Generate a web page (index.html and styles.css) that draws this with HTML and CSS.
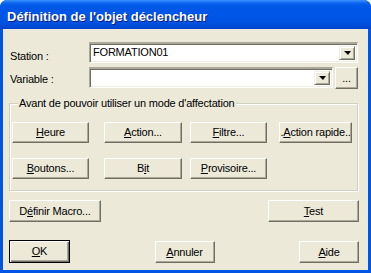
FILE: index.html
```html
<!DOCTYPE html>
<html lang="fr">
<head>
<meta charset="utf-8">
<title>Définition de l'objet déclencheur</title>
<link rel="stylesheet" href="styles.css">
</head>
<body>
<div class="window">
  <div class="titlebar"><span class="title">Définition de l'objet déclencheur</span></div>
  <div class="client">
    <div class="fields">
      <span class="lbl lbl-station">Station :</span>
      <div class="combo combo-wide">
        <span class="combo-text">FORMATION01</span>
        <span class="drop"><i class="tri"></i></span>
      </div>
      <span class="lbl lbl-var">Variable :</span>
      <div class="combo">
        <span class="combo-text"></span>
        <span class="drop"><i class="tri"></i></span>
      </div>
      <button class="btn btn-dots">...</button>
    </div>
    <fieldset class="group">
      <legend class="legend">Avant de pouvoir utiliser un mode d'affectation</legend>
      <div class="grid">
        <button class="btn b1"><u>H</u>eure</button>
        <button class="btn b2"><u>A</u>ction...</button>
        <button class="btn b3"><u>F</u>iltre...</button>
        <button class="btn b4 clip"><span class="clip-in">.<u>A</u>ction rapide..</span></button>
        <button class="btn b1"><u>B</u>outons...</button>
        <button class="btn b2">B<u>i</u>t</button>
        <button class="btn b3"><u>P</u>rovisoire...</button>
      </div>
    </fieldset>
    <div class="row-macro">
      <button class="btn btn-macro">D<u>é</u>finir Macro...</button>
      <button class="btn btn-test"><u>T</u>est</button>
    </div>
    <div class="row-bottom">
      <button class="btn btn-ok default"><u>O</u>K</button>
      <button class="btn btn-cancel"><u>A</u>nnuler</button>
      <button class="btn btn-help"><u>A</u>ide</button>
    </div>
  </div>
</div>
</body>
</html>
```
FILE: styles.css
```css
* { box-sizing: border-box; }
html, body { margin: 0; padding: 0; background: #fff; }
body { width: 371px; height: 273px; overflow: hidden; }

.window {
  width: 371px;
  height: 273px;
  display: flex;
  flex-direction: column;
  background: #0055E5;
  border-radius: 7px 7px 0 0;
  overflow: hidden;
  font-family: "Liberation Sans", Arial, sans-serif;
  font-size: 11px;
  letter-spacing: -0.2px;
  color: #000;
}

.titlebar {
  height: 29px;
  flex: none;
  padding: 9px 0 0 7px;
  background: linear-gradient(to bottom,
    #3D95FF 0px, #2B84F8 1px, #0A66EE 3px, #0058E8 6px,
    #0056E6 16px, #0053E2 22px, #004BD8 26px, #0042CC 29px);
}
.title {
  display: block;
  font-weight: bold;
  font-size: 13px;
  line-height: 15px;
  letter-spacing: 0;
  color: #fff;
  text-shadow: 1px 1px 0 #0A1883;
}

.client {
  flex: 1;
  margin: 0 3px 3px 3px;
  background: #ECE9D8;
  display: flex;
  flex-direction: column;
  padding: 13px 0 0 0;
}

/* fields */
.fields {
  display: grid;
  grid-template-columns: 79px 244px 2px 23px;
  grid-template-rows: 21px 22px;
  row-gap: 4px;
  margin-left: 7px;
}
.lbl { line-height: 13px; white-space: nowrap; }
.lbl-station { padding-top: 8px; }
.lbl-var { padding-top: 6px; }
.combo-wide { grid-column: 2 / 5; }
.btn-dots { grid-column: 4; grid-row: 2; }

.combo {
  display: flex;
  background: #fff;
  border-top: 2px solid #ACA899;
  border-left: 1px solid #ACA899;
  border-right: 1px solid #fff;
  border-bottom: 1px solid #fff;
  box-shadow: inset 1px 1px 0 #716F64, inset -1px -1px 0 #F1EFE2;
  padding: 2px 2px 2px 2px;
  height: 21px;
}
.combo-text {
  flex: 1;
  padding-left: 1px;
  line-height: 13px;
  white-space: nowrap;
}
.drop {
  width: 16px;
  flex: none;
  background: #ECE9D8;
  border: 1px solid;
  border-color: #F1EFE2 #716F64 #716F64 #F1EFE2;
  box-shadow: inset 1px 1px 0 #fff, inset -1px -1px 0 #ACA899;
  display: flex;
  align-items: center;
  justify-content: center;
}
.tri {
  width: 0;
  height: 0;
  border-left: 4px solid transparent;
  border-right: 3px solid transparent;
  border-top: 4px solid #000;
}

/* buttons */
.btn {
  margin: 0;
  padding: 0;
  font: inherit;
  letter-spacing: inherit;
  color: #000;
  background: #ECE9D8;
  border: 1px solid;
  border-color: #fff #716F64 #716F64 #fff;
  box-shadow: inset -1px -1px 0 #ACA899;
  height: 21px;
  line-height: 13px;
  text-align: center;
  white-space: nowrap;
}
.btn u { text-decoration: underline; text-underline-offset: 1px; }
.btn-dots { height: 22px; padding-top: 1px; }

/* group */
.group {
  margin: 8px 0 0 6px;
  width: 349px;
  padding: 12px 0 11px 2px;
  border: 1px solid #D0D0BF;
  box-shadow: inset 1px 1px 0 #fff, 1px 1px 0 #fff;
  min-inline-size: 0;
}
.legend {
  margin-left: 6px;
  padding: 0 1px 0 1px;
  line-height: 13px;
  background: #ECE9D8;
}
.grid {
  display: grid;
  grid-template-columns: 92px 86px 89px 73px;
  grid-template-rows: 21px 21px;
  row-gap: 15px;
}
.b1 { width: 77px; }
.b2 { width: 78px; }
.b3 { width: 77px; }
.b4 { width: 73px; }
.clip { overflow: hidden; display: flex; justify-content: center; align-items: center; }
.clip-in { flex: none; }

.row-macro {
  display: flex;
  justify-content: space-between;
  margin: 9px 9px 0 6px;
}
.btn-macro { width: 92px; height: 22px; }
.btn-test { width: 91px; height: 22px; }

.row-bottom {
  display: flex;
  justify-content: space-between;
  align-items: flex-start;
  margin: 18px 9px 0 6px;
}
.btn-ok { width: 61px; height: 23px; }
.default {
  border: 1px solid #000;
  box-shadow: inset 1px 1px 0 #fff, inset -1px -1px 0 #716F64, inset -2px -2px 0 #ACA899;
}
.btn-cancel { width: 60px; height: 22px; margin-top: 1px; }
.btn-help { width: 60px; height: 22px; margin-top: 1px; }
```
